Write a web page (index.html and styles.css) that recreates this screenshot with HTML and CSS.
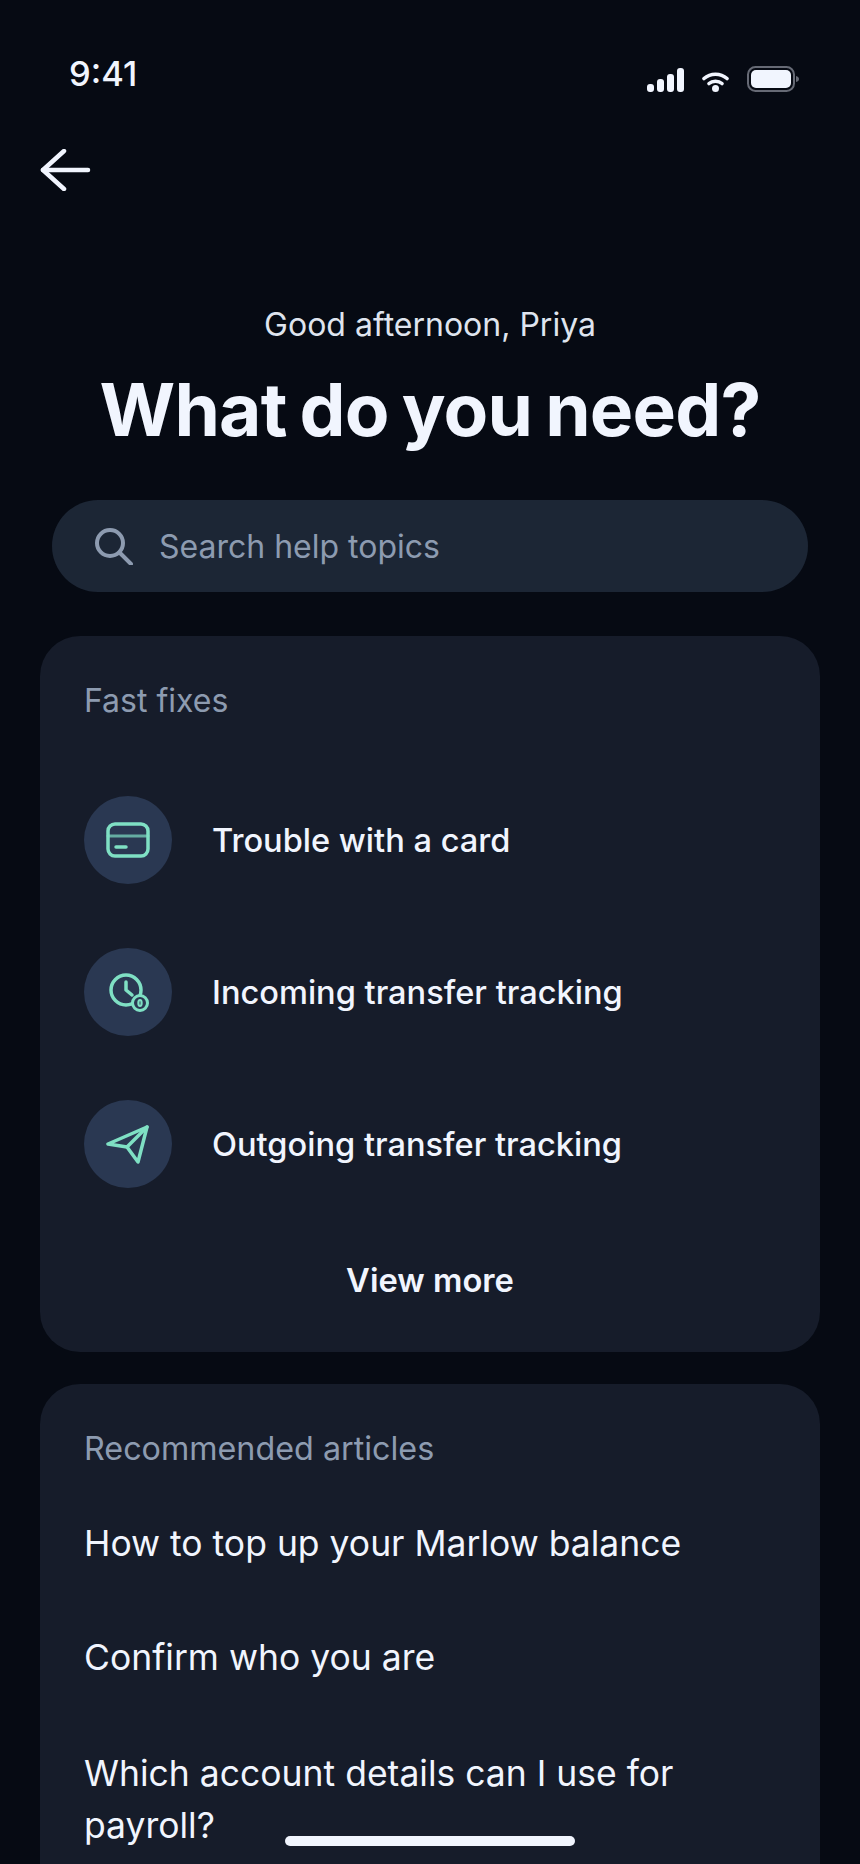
FILE: index.html
```html
<!DOCTYPE html>
<html lang="en">
<head>
    <meta charset="UTF-8">
    <meta name="viewport" content="width=device-width, initial-scale=1.0">
    <title>Help</title>
    <link rel="stylesheet" href="styles.css">
</head>
<body>
    <div class="screen">
        <div class="status-bar">
            <span class="time">9:41</span>
            <div class="status-icons">
                <svg width="37" height="24" viewBox="0 0 37 24" fill="#f1f5fe">
                    <rect x="0" y="16" width="7" height="8" rx="3"/>
                    <rect x="10" y="11" width="7" height="13" rx="3"/>
                    <rect x="20" y="6" width="7" height="18" rx="3"/>
                    <rect x="30" y="0" width="7" height="24" rx="3"/>
                </svg>
                <svg width="27" height="20" viewBox="0 0 27 20" fill="none" stroke="#f1f5fe" stroke-width="3.600" stroke-linecap="round">
                    <path d="M2 6.500C8.500 0.800 18.500 0.800 25 6.500"/>
                    <path d="M7 11.500C10.500 8.500 16.500 8.500 20 11.500"/>
                    <circle cx="13.500" cy="16.500" r="3.500" fill="#f1f5fe" stroke="none"/>
                </svg>
                <svg width="52" height="26" viewBox="0 0 52 26" fill="none">
                    <rect x="1" y="1" width="46" height="24" rx="7.500" stroke="#666a75" stroke-width="2"/>
                    <rect x="4" y="4" width="40" height="18" rx="5" fill="#f1f5fe"/>
                    <path d="M49 10C51 10.500 52 11.500 52 13C52 14.500 51 15.500 49 16Z" fill="#666a75"/>
                </svg>
            </div>
        </div>

        <div class="back-row">
            <svg width="52" height="42" viewBox="0 0 52 42" fill="none" stroke="#f1f5fe" stroke-width="4.500" stroke-linecap="round" stroke-linejoin="round">
                <path d="M48 21H3"/>
                <path d="M24 2L3 21L24 40"/>
            </svg>
        </div>

        <p class="greeting">Good afternoon, Priya</p>
        <h1 class="title">What do you need?</h1>

        <div class="search">
            <svg width="38" height="38" viewBox="0 0 38 38" fill="none" stroke="#8d9bb0" stroke-width="4" stroke-linecap="round">
                <circle cx="15" cy="16" r="13"/>
                <path d="M25 26L36 37"/>
            </svg>
            <span>Search help topics</span>
        </div>

        <section class="card fixes">
            <h2 class="card-title">Fast fixes</h2>
            <div class="fix-list">
                <div class="fix-row">
                    <div class="fix-icon">
                        <svg width="44" height="36" viewBox="0 0 44 36" fill="none" stroke="#7fe0c4" stroke-width="3.500" stroke-linecap="round">
                            <rect x="2" y="2" width="40" height="32" rx="7"/>
                            <path d="M2 14H42" stroke-opacity="0.7" stroke-width="3"/>
                            <path d="M10 25H20"/>
                        </svg>
                    </div>
                    <span>Trouble with a card</span>
                </div>
                <div class="fix-row">
                    <div class="fix-icon">
                        <svg width="44" height="44" viewBox="0 0 44 44" fill="none" stroke="#7fe0c4" stroke-width="3.500" stroke-linecap="round" stroke-linejoin="round">
                            <circle cx="20" cy="20" r="15"/>
                            <path d="M20 12V20L26 25"/>
                            <circle cx="34" cy="33" r="7.500" fill="#2a3852" stroke-width="3"/>
                            <ellipse cx="34" cy="33" rx="1.600" ry="3" stroke-width="2.200"/>
                        </svg>
                    </div>
                    <span>Incoming transfer tracking</span>
                </div>
                <div class="fix-row">
                    <div class="fix-icon">
                        <svg width="44" height="40" viewBox="0 0 44 40" fill="none" stroke="#7fe0c4" stroke-width="3.500" stroke-linecap="round" stroke-linejoin="round">
                            <path d="M41 3L2 20L21 23L32 38Z"/>
                            <path d="M41 3L21 23"/>
                        </svg>
                    </div>
                    <span>Outgoing transfer tracking</span>
                </div>
            </div>
            <div class="view-more">View more</div>
        </section>

        <section class="card articles">
            <h2 class="card-title">Recommended articles</h2>
            <p class="article">How to top up your Marlow balance</p>
            <p class="article">Confirm who you are</p>
            <p class="article">Which account details can I use for payroll?</p>
        </section>

        <div class="home-bar"></div>
    </div>
</body>
</html>
```

FILE: styles.css
```css
* {
    box-sizing: border-box;
}

html, body {
    margin: 0;
    height: 100%;
    background: #060a13;
}

body {
    font-family: Inter, "Liberation Sans", sans-serif;
    color: #f1f5fe;
}

.screen {
    position: relative;
    width: 860px;
    height: 1864px;
    overflow: hidden;
    background: #060a13;
    padding: 0 40px;
}

.status-bar {
    display: flex;
    justify-content: space-between;
    align-items: center;
    height: 34px;
    margin-top: 57px;
    padding: 0 21px 0 29px;
}

.time {
    font-size: 34.500px;
    font-weight: 500;
    line-height: 34px;
}

.status-icons {
    display: flex;
    align-items: flex-end;
    gap: 18px;
    margin-top: 10px;
}

.back-row {
    margin-top: 58px;
    height: 42px;
}

.greeting {
    margin: 115px 0 0;
    text-align: center;
    font-size: 32px;
    line-height: 38px;
    color: #dfe4ee;
}

.title {
    margin: 25px 0 0;
    text-align: center;
    font-size: 73px;
    font-weight: 700;
    line-height: 82px;
    letter-spacing: -0.8px;
    word-spacing: -3.500px;
}

.search {
    display: flex;
    align-items: center;
    gap: 26px;
    height: 92px;
    margin: 49px 12px 0;
    padding: 0 43px;
    border-radius: 46px;
    background: #1c2635;
    color: #8d9bb0;
    font-size: 32px;
}

.card {
    border-radius: 40px;
    background: #161c2a;
    padding: 0 44px;
}

.fixes {
    height: 716px;
    margin-top: 44px;
}

.card-title {
    margin: 0;
    padding-top: 45px;
    font-size: 32px;
    line-height: 40px;
    font-weight: 400;
    color: #8d9bb0;
}

.fix-list {
    margin-top: 75px;
    display: flex;
    flex-direction: column;
    gap: 64px;
}

.fix-row {
    display: flex;
    align-items: center;
    gap: 40px;
    font-size: 32.600px;
    font-weight: 500;
}

.fix-icon {
    display: flex;
    align-items: center;
    justify-content: center;
    width: 88px;
    height: 88px;
    border-radius: 50%;
    background: #2a3852;
}

.view-more {
    margin-top: 72px;
    text-align: center;
    font-size: 32.700px;
    font-weight: 600;
    line-height: 40px;
}

.articles {
    margin-top: 32px;
    height: 600px;
}

.articles .card-title {
    padding-top: 45px;
    font-size: 32.300px;
}

.article {
    margin: 0 0 62px;
    font-size: 35.500px;
    line-height: 52px;
}

.articles .card-title + .article {
    margin-top: 49px;
}

.article:last-child {
    margin-top: 64px;
}

.home-bar {
    position: absolute;
    left: 285px;
    bottom: 18px;
    width: 290px;
    height: 10px;
    border-radius: 5px;
    background: #f1f5fe;
}
```
